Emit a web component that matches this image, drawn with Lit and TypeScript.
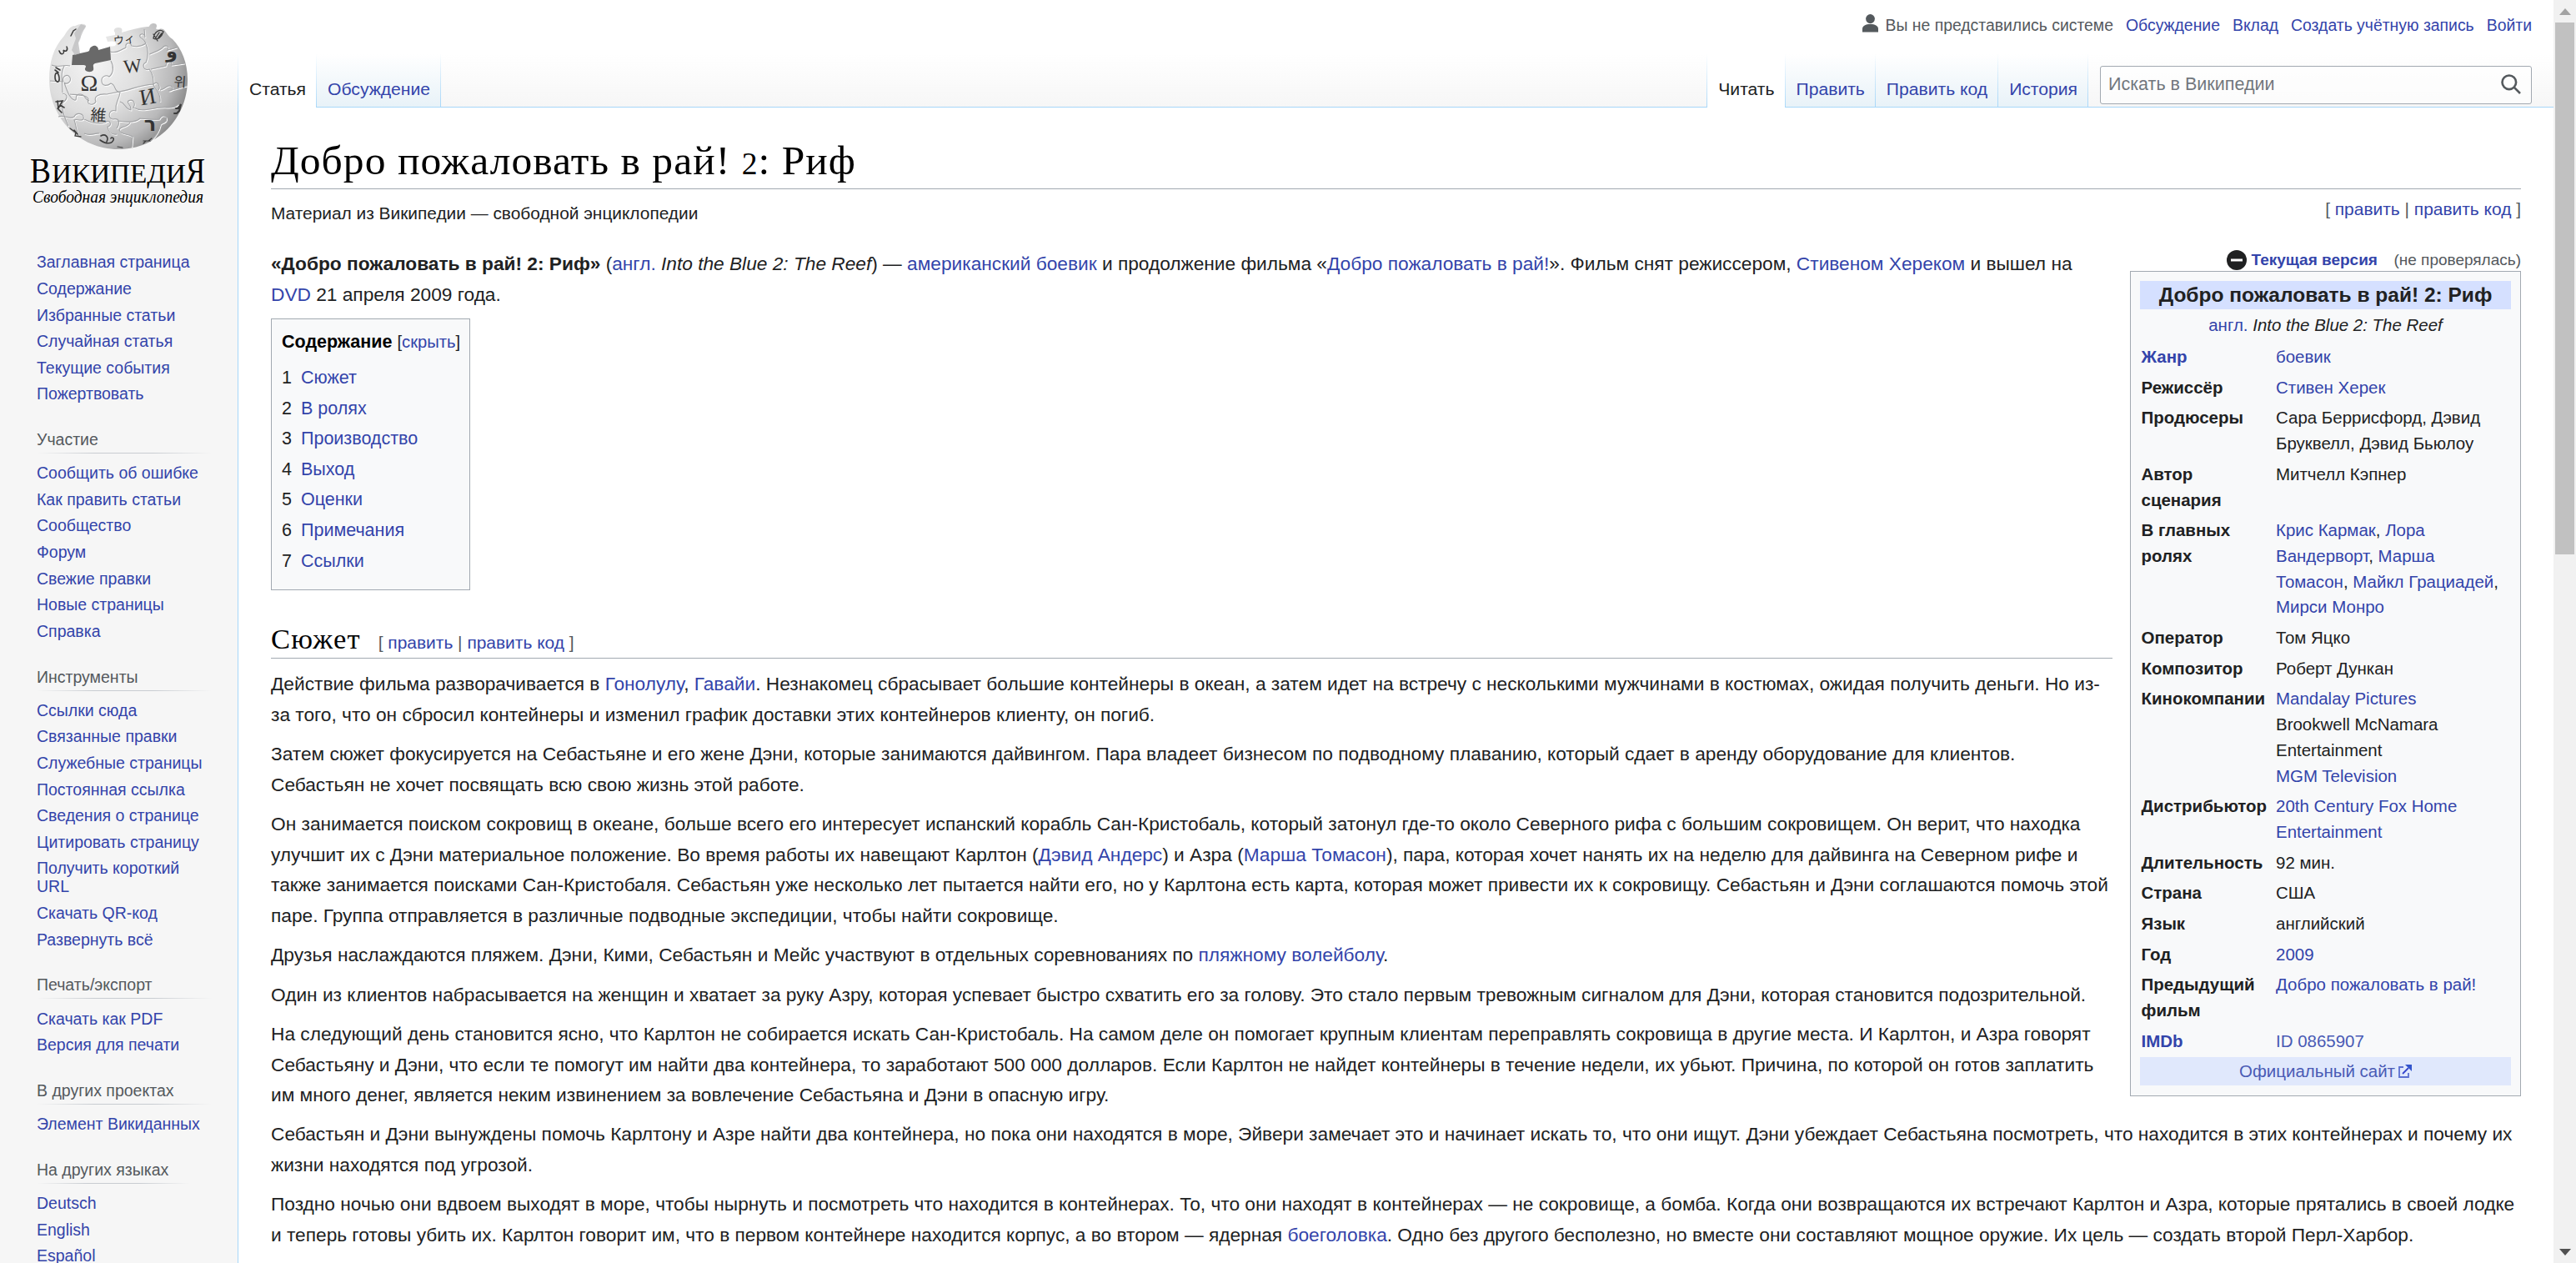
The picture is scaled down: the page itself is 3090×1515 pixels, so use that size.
import { LitElement, html, css, svg } from "lit";
import { customElement } from "lit/decorators.js";

const a = (t: string) => html`<a>${t}</a>`;

const nav: { title?: string; short?: boolean; items: string[] }[] = [
  { items: ["Заглавная страница", "Содержание", "Избранные статьи", "Случайная статья", "Текущие события", "Пожертвовать"] },
  { title: "Участие", items: ["Сообщить об ошибке", "Как править статьи", "Сообщество", "Форум", "Свежие правки", "Новые страницы", "Справка"] },
  { title: "Инструменты", items: ["Ссылки сюда", "Связанные правки", "Служебные страницы", "Постоянная ссылка", "Сведения о странице", "Цитировать страницу", "Получить короткий URL", "Скачать QR-код", "Развернуть всё"] },
  { title: "Печать/экспорт", items: ["Скачать как PDF", "Версия для печати"] },
  { title: "В других проектах", items: ["Элемент Викиданных"] },
  { title: "На других языках", short: true, items: ["Deutsch", "English", "Español"] },
];

const toc = ["Сюжет", "В ролях", "Производство", "Выход", "Оценки", "Примечания", "Ссылки"];

const br = html`<br />`;
const facts: [unknown, unknown][] = [
  [a("Жанр"), a("боевик")],
  ["Режиссёр", a("Стивен Херек")],
  ["Продюсеры", html`Сара Беррисфорд, Дэвид${br}Бруквелл, Дэвид Бьюлоу`],
  [html`Автор${br}сценария`, "Митчелл Кэпнер"],
  [html`В главных${br}ролях`, html`<a>Крис Кармак</a>, <a>Лора${br}Вандерворт</a>, <a>Марша${br}Томасон</a>, <a>Майкл Грациадей</a>,${br}<a>Мирси Монро</a>`],
  ["Оператор", "Том Яцко"],
  ["Композитор", "Роберт Дункан"],
  ["Кинокомпании", html`<a>Mandalay Pictures</a>${br}Brookwell McNamara${br}Entertainment${br}<a>MGM Television</a>`],
  ["Дистрибьютор", html`<a>20th Century Fox Home${br}Entertainment</a>`],
  ["Длительность", "92 мин."],
  ["Страна", "США"],
  ["Язык", "английский"],
  ["Год", a("2009")],
  [html`Предыдущий${br}фильм`, a("Добро пожаловать в рай!")],
  [a("IMDb"), html`<a class="ext">ID 0865907</a>`],
];

@customElement("wiki-logo")
export class WikiLogo extends LitElement {
  static styles = css`
    :host { display: block; }
    svg { display: block; }
    .g { font-family: "Liberation Serif", serif; fill: #333; text-anchor: middle; }
    .cjk { font-family: "Noto Sans CJK JP", sans-serif; }
    .w { font-family: "Liberation Serif", serif; fill: #000; }
  `;
  render() {
    return html`<svg width="286" height="280" viewBox="0 0 286 280">
      <defs>
        <radialGradient id="ball" gradientUnits="userSpaceOnUse" cx="112" cy="78" r="128">
          <stop offset="0" stop-color="#f4f4f4" />
          <stop offset="0.45" stop-color="#dedede" />
          <stop offset="0.75" stop-color="#b9b9ba" />
          <stop offset="1" stop-color="#777" />
        </radialGradient>
      </defs>
      <path fill="url(#ball)" d="M97 29C93 29 91 32 88 31C83 33 80 38 77 43C64 57 59 75 59 95C59 141 95 179 142 179C189 179 225 142 225 95C225 76 218 58 207 47C202 44 200 39 196 35C192 33 189 37 187 34C189 31 188 28 184 28C179 28 180 33 177 32C167 33 156 36 146 39C147 36 147 33 142 33C138 33 135 36 138 39L138 42L127 44L129 50C135 49 138 49 139 52C140 56 134 56 131 55L131 57L97 66L96 64C93 61 91 59 93 55C93 51 97 49 97 44C95 40 98 37 101 35C105 32 103 28 97 29Z" />
      <path fill="#696969" d="M87 66L105 62C109 61 106 58 110 56C114 53 118 56 118 60L132 56L133 72L114 76C110 78 113 80 112 84C109 88 101 86 102 82C104 79 103 78 99 78L86 78Z" />
      <path fill="#bfbfc0" d="M97 29L103 31L99 39L94 51L96 64L90 66L86 60L91 46L89 40Z" opacity=".8" />
      <g fill="none" stroke="#fff" stroke-width="1.1" transform="translate(.8 1)">${this.seams()}</g>
      <g fill="none" stroke="#a3a4a6" stroke-width="1.1">${this.seams()}</g>
      <g class="g">
        <text font-size="28" x="107" y="109">Ω</text>
        <text font-size="23" x="159" y="87" transform="rotate(-6 159 80)">W</text>
        <text font-size="27" x="177" y="125" transform="rotate(-10 177 116)">И</text>
        <text class="cjk" font-size="19" x="118" y="145" transform="rotate(3 118 138)">維</text>
        <text class="cjk" font-size="13" x="149" y="52" transform="rotate(-8 149 47)">ウィ</text>
        <text font-size="24" font-weight="bold" x="180" y="157" font-family="DejaVu Sans">ר</text>
        <text font-size="22" font-weight="bold" x="206" y="69" font-family="DejaVu Sans">و</text>
        <text class="cjk" font-size="16" x="216" y="104" transform="rotate(4 216 98)">위</text>
      </g>
      <g fill="none" stroke="#3c3c3c" stroke-width="1.6" stroke-linecap="round">
        <path d="M66 92C66 99 72 101 71 93C70 86 66 86 66 92M66 84L70 87M67 81L72 84" />
        <path d="M67 122L75 121L70 130L69 121M72 126L77 129M69 130L74 135" />
        <path d="M184 46C185 38 192 34 196 38C194 44 189 49 184 46M187 45L191 39M190 45L194 40M184 41L189 49" stroke-width="1.3" />
        <path d="M121 163C126 160 131 164 128 170M120 168C127 173 134 173 136 168C137 165 134 164 133 166" />
        <path d="M84 154L91 159L90 163L97 164M89 156L93 161" stroke-width="1.3" />
        <path d="M214 129L217 125L215 133L212 136L209 136M211 130L215 130" stroke-width="2" />
        <path d="M172 172L175 169L178 169L182 166M141 176L147 177M172 169L180 169" stroke-width="1.2" />
        <path d="M71 61C73 67 78 65 76 60C79 63 82 60 80 56M85 43L88 37L91 35" stroke-width="1.5" />
      </g>
      <text class="w" font-size="43" x="36" y="219" textLength="25" lengthAdjust="spacingAndGlyphs">В</text>
      <text class="w" font-size="32" x="62" y="219" textLength="161" lengthAdjust="spacingAndGlyphs">ИКИПЕДИ</text>
      <text class="w" font-size="43" x="223" y="219" textLength="23" lengthAdjust="spacingAndGlyphs">Я</text>
      <text class="w" font-size="21.5" font-style="italic" x="39" y="243" textLength="205" lengthAdjust="spacingAndGlyphs">Свободная энциклопедия</text>
    </svg>`;
  }
  private seams() {
    return svg`
      <path d="M62 78C70 82 76 77 84 79M60 97L76 98C74 91 81 88 84 93C86 98 80 102 77 99C81 111 84 118 89 120C94 121 88 114 95 113C103 112 101 120 107 121" />
      <path d="M133 73C137 80 136 88 131 92C127 89 121 92 122 98C123 104 129 103 133 100C140 102 136 110 144 111C142 122 138 122 139 133C131 130 128 141 135 143C144 141 144 148 140 154" />
      <path d="M84 113C95 114 104 114 106 119C103 126 112 127 115 122C112 116 118 112 128 113L143 110C156 108 168 102 184 101C189 96 193 104 190 108" />
      <path d="M132 62C140 64 145 60 151 57C150 51 156 50 158 55C166 57 172 54 175 52C173 46 166 46 168 42C171 39 174 42 174 45L173 35" />
      <path d="M175 53C178 59 178 68 175 75C169 77 173 86 179 83C184 89 184 95 184 102C187 108 193 112 192 122" />
      <path d="M179 65C184 63 190 61 194 58C199 52 204 56 201 60L212 57M181 83L199 79C200 71 207 73 206 78L221 76M192 108C199 107 200 101 205 103C209 106 207 109 202 109L224 103" />
      <path d="M70 140C77 137 83 144 89 140C92 134 102 136 100 143C96 146 92 142 89 144C92 152 91 158 95 163M101 143C111 148 119 149 126 147C131 142 136 150 129 152C130 157 132 162 140 161" />
      <path d="M144 122C151 124 150 131 157 132C158 125 151 124 154 121C160 118 163 124 160 129C170 134 176 131 192 129C202 128 207 131 214 125" />
      <path d="M141 145C154 147 163 147 168 142C177 143 184 144 191 143C195 135 202 140 199 145C195 149 192 147 192 151C190 161 184 165 180 170M156 147C151 154 144 151 143 156C146 163 153 159 159 164L158 176M101 160C109 164 114 159 119 160" />
      <path d="M77 79C72 89 75 96 75 111M75 112C84 114 79 121 75 123C73 133 79 144 82 151" />`;
  }
}

@customElement("app-root")
export class AppRoot extends LitElement {
  static styles = css`
    :host {
      display: block; width: 3090px; height: 1515px; overflow: hidden;
      font: 22.69px/36.5px "Liberation Sans", Arial, sans-serif; color: #202122; background: #f6f6f6;
    }
    * { box-sizing: border-box; }
    a { color: #3344aa; text-decoration: none; }
    .page {
      display: grid; grid-template-columns: 285px 1fr 27px; height: 1515px;
      background: linear-gradient(#fff 50%, #f6f6f6 100%) 0 0 / 100% 130px no-repeat; overflow: hidden;
    }
    .side { height: 1515px; overflow: hidden; }
    .logo { height: 299.5px; }
    .group { padding: 0 30px 0 44px; font-size: 19.5px; line-height: 21.94px; }
    .group .t { margin-top: 28px; height: 35.4px; color: #54595d; }
    .rule { width: 210px; height: 1px; margin: 4px 0 0; background: linear-gradient(to right, #c8ccd100 0%, #c8ccd1 33%, #c8ccd1 66%, #c8ccd100 100%); }
    .rule.short { width: 184px; }
    .group .i { padding: 4.84px 0; width: 180px; }
    .group .i.wide { white-space: nowrap; }
    .main { display: flex; flex-direction: column; height: 1515px; overflow: hidden; }
    .head { height: 128px; display: flex; flex-direction: column; }
    .user { height: 65px; display: flex; justify-content: flex-end; padding: 19px 26px 0 0; font-size: 19.4px; line-height: 23px; color: #54595d; white-space: nowrap; }
    .user svg { margin: -2px 9px 0 0; }
    .user a { margin-left: 15px; }
    .bar { display: flex; height: 64px; margin-bottom: -1px; z-index: 1; padding-right: 26px; }
    .tab { height: 64px; padding: 29.5px 12px 0 13px; font-size: 21.125px; line-height: 24px; white-space: nowrap;
      border-right: 1px solid; border-image: linear-gradient(to bottom, #a7d7f900, #a7d7f9) 1;
      background: linear-gradient(to top, #e8f2f8 0%, #fff 100%); }
    .tab.off { border-bottom: 1px solid #a7d7f9; }
    .tab.on { background: #fff; color: #202122; }
    .first { border-left: 1px solid; }
    .gap { flex: 1; }
    .search { margin: 14px 0 0 14px; width: 518px; height: 46px; border: 1px solid #a2a9b1; border-radius: 3px; background: rgba(255,255,255,.6);
      padding: 0 12px 2px 9px; display: flex; align-items: center; justify-content: space-between; color: #72777d; font-size: 21.5px; }
    .body { flex: 1; background: #fff; border: 1px solid #a7d7f9; border-width: 1px 0 0 1px; padding: 34px 39px 0 39px; }
    h1, h2 { font-family: "Liberation Serif", serif; font-weight: 400; color: #000; margin: 0; white-space: nowrap; }
    h1 { font-size: 49.5px; letter-spacing: 1.05px; line-height: 60px; height: 64px; border-bottom: 1px solid #a2a9b1; }
    .old { font-size: .76em; }
    .sub { height: 71px; display: flex; justify-content: space-between; padding-top: 10px; }
    .from { font-size: 20.88px; line-height: 38px; }
    .edit { font-family: "Liberation Sans", Arial, sans-serif; color: #54595d; font-size: 20.95px; line-height: 28px; letter-spacing: 0; }
    .cols { display: grid; grid-template-columns: 2209px 469px; justify-content: space-between; height: 1044px; }
    p { margin: 0 0 11px; white-space: nowrap; }
    .toc { width: 239px; height: 326px; margin-top: 11px; border: 1px solid #a2a9b1; background: #f8f9fa; padding: 10px 12px; font-size: 21.5px; white-space: nowrap; }
    .toc .h { height: 42px; line-height: 35px; }
    .toc b { color: #000; }
    .toc small { font-size: 20.2px; }
    .toc .l { display: flex; gap: 11px; height: 36.6px; line-height: 36px; }
    h2 { display: flex; align-items: baseline; gap: 21px; font-size: 34.5px; letter-spacing: 1.2px; line-height: 45px; margin: 36px 0 12px; height: 46px; border-bottom: 1px solid #a2a9b1; }
    .flag { display: flex; align-items: center; justify-content: flex-end; height: 27px; font-size: 19px; white-space: nowrap; line-height: 26px; }
    .flag svg { margin-right: 6px; }
    .flag span { margin-left: 19.5px; color: #54595d; }
    .box { height: 990px; border: 1px solid #a2a9b1; background: #f8f9fa; padding: 11px 11px 0; font-size: 20.475px; line-height: 30.7px; white-space: nowrap; }
    .title { background: #d5e0ff; height: 34px; font-size: 24.5px; line-height: 34px; text-align: center; font-weight: 700; }
    .orig { text-align: center; height: 39px; line-height: 38px; }
    .row { display: grid; grid-template-columns: 161.5px 1fr; padding: 3px 1.5px 3px; }
    .ext { color: #4a5bb5; }
    .site { background: #e0e8fc; height: 34px; line-height: 33px; display: flex; gap: 4px; align-items: center; justify-content: center; }
    .scroll { background: #f1f1f1; display: flex; flex-direction: column; align-items: center; }
    .thumb { width: 23px; height: 638px; background: #c1c1c1; }
    .up { height: 27px; display: grid; place-items: center; }
    .down { margin-top: auto; height: 27px; display: grid; place-items: center; }
  `;

  private edit() {
    return html`<span class="edit">[ <a>править</a> | <a>править код</a> ]</span>`;
  }

  render() {
    return html`<div class="page">
      <nav class="side">
        <wiki-logo class="logo"></wiki-logo>
        ${nav.map((g) => html`<div class="group">
          ${g.title ? html`<div class="t">${g.title}<div class="rule ${g.short ? "short" : ""}"></div></div>` : ""}
          ${g.items.map((i) => html`<div class="i ${i.endsWith("URL") ? "" : "wide"}"><a>${i}</a></div>`)}
        </div>`)}
      </nav>
      <main class="main">
        <div class="head">
          <div class="user">
            <svg width="19" height="22" viewBox="0 0 19 22" fill="#54595d"><ellipse cx="9.5" cy="5.6" rx="5.4" ry="5.6" /><path d="M0 21.5V17.5C0 14 4 12 9.5 12S19 14 19 17.5V21.5Z" /></svg>
            Вы не представились системе
            <a>Обсуждение</a><a>Вклад</a><a>Создать учётную запись</a><a>Войти</a>
          </div>
          <div class="bar">
            <div class="tab on first">Статья</div>
            <div class="tab off"><a>Обсуждение</a></div>
            <div class="gap"></div>
            <div class="tab on first">Читать</div>
            <div class="tab off"><a>Править</a></div>
            <div class="tab off"><a>Править код</a></div>
            <div class="tab off"><a>История</a></div>
            <div class="search">Искать в Википедии
              <svg width="24" height="24" viewBox="0 0 24 24" fill="none" stroke="#54595d" stroke-width="2.6"><circle cx="9.8" cy="9.8" r="8.3" /><path d="M15.6 15.6L23 23" /></svg>
            </div>
          </div>
        </div>
        <article class="body">
          <h1>Добро пожаловать в рай! <span class="old">2</span>: Риф</h1>
          <div class="sub"><span class="from">Материал из Википедии — свободной энциклопедии</span>${this.edit()}</div>
          <div class="cols">
            <section>
              <p><b>«Добро пожаловать в рай! 2: Риф»</b> (<a>англ.</a> <i>Into the Blue 2: The Reef</i>) — <a>американский</a> <a>боевик</a> и продолжение фильма «<a>Добро пожаловать в рай!</a>». Фильм снят режиссером, <a>Стивеном Хереком</a> и вышел на<br /><a>DVD</a> 21 апреля 2009 года.</p>
              <div class="toc">
                <div class="h"><b>Содержание</b> <small>[<a>скрыть</a>]</small></div>
                ${toc.map((t, n) => html`<div class="l"><span>${n + 1}</span><a>${t}</a></div>`)}
              </div>
              <h2>Сюжет ${this.edit()}</h2>
              <p>Действие фильма разворачивается в <a>Гонолулу</a>, <a>Гавайи</a>. Незнакомец сбрасывает большие контейнеры в океан, а затем идет на встречу с несколькими мужчинами в костюмах, ожидая получить деньги. Но из-<br />за того, что он сбросил контейнеры и изменил график доставки этих контейнеров клиенту, он погиб.</p>
              <p>Затем сюжет фокусируется на Себастьяне и его жене Дэни, которые занимаются дайвингом. Пара владеет бизнесом по подводному плаванию, который сдает в аренду оборудование для клиентов.<br />Себастьян не хочет посвящать всю свою жизнь этой работе.</p>
              <p>Он занимается поиском сокровищ в океане, больше всего его интересует испанский корабль Сан-Кристобаль, который затонул где-то около Северного рифа с большим сокровищем. Он верит, что находка<br />улучшит их с Дэни материальное положение. Во время работы их навещают Карлтон (<a>Дэвид Андерс</a>) и Азра (<a>Марша Томасон</a>), пара, которая хочет нанять их на неделю для дайвинга на Северном рифе и<br />также занимается поисками Сан-Кристобаля. Себастьян уже несколько лет пытается найти его, но у Карлтона есть карта, которая может привести их к сокровищу. Себастьян и Дэни соглашаются помочь этой<br />паре. Группа отправляется в различные подводные экспедиции, чтобы найти сокровище.</p>
              <p>Друзья наслаждаются пляжем. Дэни, Кими, Себастьян и Мейс участвуют в отдельных соревнованиях по <a>пляжному волейболу</a>.</p>
              <p>Один из клиентов набрасывается на женщин и хватает за руку Азру, которая успевает быстро схватить его за голову. Это стало первым тревожным сигналом для Дэни, которая становится подозрительной.</p>
              <p>На следующий день становится ясно, что Карлтон не собирается искать Сан-Кристобаль. На самом деле он помогает крупным клиентам переправлять сокровища в другие места. И Карлтон, и Азра говорят<br />Себастьяну и Дэни, что если те помогут им найти два контейнера, то заработают 500 000 долларов. Если Карлтон не найдет контейнеры в течение недели, их убьют. Причина, по которой он готов заплатить<br />им много денег, является неким извинением за вовлечение Себастьяна и Дэни в опасную игру.</p>
            </section>
            <aside>
              <div class="flag">
                <svg width="24" height="24" viewBox="0 0 24 24"><circle cx="12" cy="12" r="12" fill="#202122" /><path d="M5 12H19" stroke="#fff" stroke-width="3" /></svg>
                <b><a>Текущая версия</a></b><span>(не проверялась)</span>
              </div>
              <div class="box">
                <div class="title">Добро пожаловать в рай! 2: Риф</div>
                <div class="orig"><a>англ.</a> <i>Into the Blue 2: The Reef</i></div>
                ${facts.map(([k, v]) => html`<div class="row"><b>${k}</b><span>${v}</span></div>`)}
                <div class="site"><a class="ext">Официальный сайт</a>
                  <svg width="16" height="16" viewBox="0 0 16 16" fill="none" stroke="#5b6fd0" stroke-width="1.8"><path d="M6 3H1V15H12V10" /><path d="M5 11L12 4" stroke="#3344cc" /><path d="M8 0H16V8Z" fill="#3355cc" stroke="none" /></svg>
                </div>
              </div>
            </aside>
          </div>
          <p>Себастьян и Дэни вынуждены помочь Карлтону и Азре найти два контейнера, но пока они находятся в море, Эйвери замечает это и начинает искать то, что они ищут. Дэни убеждает Себастьяна посмотреть, что находится в этих контейнерах и почему их<br />жизни находятся под угрозой.</p>
          <p>Поздно ночью они вдвоем выходят в море, чтобы нырнуть и посмотреть что находится в контейнерах. То, что они находят в контейнерах — не сокровище, а бомба. Когда они возвращаются их встречают Карлтон и Азра, которые прятались в своей лодке<br />и теперь готовы убить их. Карлтон говорит им, что в первом контейнере находится корпус, а во втором — ядерная <a>боеголовка</a>. Одно без другого бесполезно, но вместе они составляют мощное оружие. Их цель — создать второй Перл-Харбор.</p>
        </article>
      </main>
      <div class="scroll">
        <div class="up"><svg width="14" height="8" viewBox="0 0 14 8"><path d="M7 0L14 8H0Z" fill="#a3a3a3" /></svg></div>
        <div class="thumb"></div>
        <div class="down"><svg width="14" height="8" viewBox="0 0 14 8"><path d="M7 8L14 0H0Z" fill="#505050" /></svg></div>
      </div>
    </div>`;
  }
}
